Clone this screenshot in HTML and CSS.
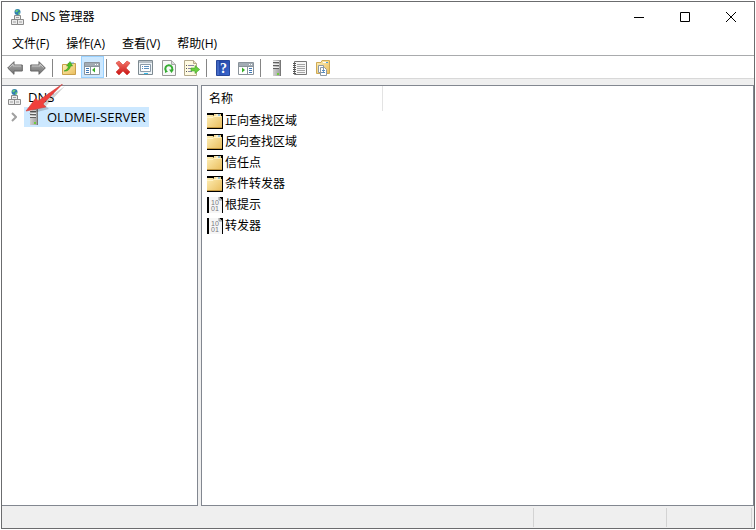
FILE: index.html
```html
<!DOCTYPE html>
<html lang="zh-CN">
<head>
  <meta charset="UTF-8" />
  <title>DNS 管理器</title>
  <meta name="viewport" content="width=device-width, initial-scale=1" />
  <link rel="stylesheet" href="styles.css">
</head>
<body>
  <!-- shared icons -->
  <svg class="defs" width="0" height="0" aria-hidden="true">
    <defs>
      <linearGradient id="gold" x1="0" y1="0" x2="1" y2="1">
        <stop offset="0" stop-color="#fff0b8" />
        <stop offset="1" stop-color="#e9bd5c" />
      </linearGradient>
      <linearGradient id="metal" x1="0" y1="0" x2="0" y2="1">
        <stop offset="0" stop-color="#b4b4b4" />
        <stop offset="1" stop-color="#6f6f6f" />
      </linearGradient>
      <linearGradient id="tower" x1="0" y1="0" x2="1" y2="0">
        <stop offset="0" stop-color="#d0d0d0" />
        <stop offset="1" stop-color="#9a9a9a" />
      </linearGradient>
      <linearGradient id="red" x1="0" y1="0" x2="0" y2="1">
        <stop offset="0" stop-color="#f4776b" />
        <stop offset="1" stop-color="#c91313" />
      </linearGradient>
      <linearGradient id="blue" x1="0" y1="0" x2="1" y2="1">
        <stop offset="0" stop-color="#1d3f9c" />
        <stop offset="1" stop-color="#3b68d0" />
      </linearGradient>
      <symbol id="dns" viewBox="0 0 16 16">
        <circle cx="7.500" cy="3" r="3" fill="#2f7fb0" />
        <path d="M5 2l2-1.500 1.500 1-2 2zM8 4l2-1v2l-1 .8z" fill="#6fd06f" />
        <path d="M4.500 6.500h6v4h-6zM1.500 10.500h6v5h-6zM7.500 10.500h6v5h-6z" fill="#ececec" stroke="#8a8a8a" />
        <path d="M6 8.500h3M3 13h3M9 13h3" stroke="#a0a0a0" />
      </symbol>
      <symbol id="server" viewBox="0 0 16 16">
        <path d="M4 0h8v16H4z" fill="url(#tower)" />
        <path d="M11 0h1v16h-1z" fill="#777" />
        <path d="M4 2h6v1H4zM4 5h6v1H4zM4 8h6v1H4z" fill="#5f5f5f" />
        <path d="M4 1h6v1H4zM4 4h6v1H4zM4 7h6v1H4z" fill="#ededed" />
        <path d="M8 13h2v2H8z" fill="#6fce3c" />
      </symbol>
      <symbol id="folder" viewBox="0 0 16 16">
        <path d="M0 0h16v16H0z" fill="#000" />
        <path d="M0 2h6l1 1V1h7v2h1v12H0z" fill="url(#gold)" />
        <path d="M0 4.500h6l1-1h7" fill="none" stroke="#fff3c6" />
        <path d="M9 2h4" stroke="#fff" /><path d="M11 2h2" stroke="#398fd2" />
        <path d="M0 14.500h15" stroke="#c59a42" />
      </symbol>
      <symbol id="record" viewBox="0 0 16 16">
        <path d="M0 0h16v16H0z" fill="#000" />
        <path d="M2 0h10l3 3v13H2z" fill="#f6f6f6" />
        <path d="M12 0v3h3" fill="#ccc" stroke="#999" />
        <text x="4" y="8" class="bits">10</text>
        <text x="4" y="14" class="bits">01</text>
      </symbol>
    </defs>
  </svg>

  <div class="window">
    <header class="titlebar">
      <svg class="icon"><use href="#dns" /></svg>
      <h1>DNS 管理器</h1>
      <div class="controls">
        <button type="button" aria-label="最小化"><svg viewBox="0 0 10 10"><path d="M0 5.500h10" /></svg></button>
        <button type="button" aria-label="最大化"><svg viewBox="0 0 10 10"><path d="M.5.5h9v9h-9z" /></svg></button>
        <button type="button" aria-label="关闭"><svg viewBox="0 0 10 10"><path d="M0 0l10 10M10 0L0 10" /></svg></button>
      </div>
    </header>

    <nav class="menubar">
      <button type="button">文件(F)</button>
      <button type="button">操作(A)</button>
      <button type="button">查看(V)</button>
      <button type="button">帮助(H)</button>
    </nav>

    <div class="toolbar">
      <button type="button" aria-label="后退">
        <svg class="icon" viewBox="0 0 16 16"><path d="M.7 8L7 1.700v3.300h8.300v6H7v3.300z" fill="url(#metal)" stroke="#666" /><path d="M2.500 7.500L6 4v2h8" fill="none" stroke="#c8c8c8" /></svg>
      </button>
      <button type="button" aria-label="前进">
        <svg class="icon" viewBox="0 0 16 16"><path d="M15.300 8L9 1.700v3.300H.7v6H9v3.300z" fill="url(#metal)" stroke="#666" /><path d="M13.500 7.500L10 4v2H2" fill="none" stroke="#c8c8c8" /></svg>
      </button>
      <span class="sep"></span>
      <button type="button" aria-label="上一级">
        <svg class="icon" viewBox="0 0 16 16"><path d="M1.500 4.500H6l1-1h7.500v11h-13z" fill="url(#gold)" stroke="#c9a04c" /><path d="M10 3h3" stroke="#5aa6dd" /><path d="M3 11c3-1 4-3 4.500-5H5.500L9 1.500 11.500 6h-2C9 9 7 11.500 3 11z" fill="#4fc324" stroke="#2f8f18" stroke-width=".5" /></svg>
      </button>
      <button type="button" class="on" aria-label="显示/隐藏控制台树" aria-pressed="true">
        <svg class="icon" viewBox="0 0 16 16"><path d="M.5 2.500h15v12H.5z" fill="#fff" stroke="#8a939b" /><path d="M1 3h14v3H1z" fill="#a3acb4" /><path d="M11 4.500h1M13 4.500h1" stroke="#fff" /><path d="M1 6.500h14M6.500 7v7" stroke="#8a939b" /><path d="M2 8.500h3M2 10.500h3M2 12.500h3" stroke="#3f78b4" /><path d="M11 7.500v5L8 10z" fill="#36ae25" /></svg>
      </button>
      <span class="sep"></span>
      <button type="button" aria-label="删除">
        <svg class="icon" viewBox="0 0 16 16"><path d="M1 3l3-2 4 4 4-4 3 2-4 5 4 4-3 3-4-4-4 4-3-3 4-4z" fill="url(#red)" stroke="#d33a32" stroke-width=".6" /></svg>
      </button>
      <button type="button" aria-label="属性">
        <svg class="icon" viewBox="0 0 16 16"><path d="M.5.500h14v14H.5z" fill="#eef4f8" stroke="#7d8990" /><path d="M1 2h13" stroke="#b8c0c6" stroke-width="2" /><path d="M2.500 4.500h10v7h-10z" fill="#fff" stroke="#8c9ba8" /><path d="M4 6.500h1M4 8.500h1M6 6.500h5M6 8.500h5" stroke="#5c90bf" /><path d="M6 13.500h4" stroke="#31b7e5" /></svg>
      </button>
      <button type="button" aria-label="刷新">
        <svg class="icon" viewBox="0 0 16 16"><path d="M1.500.500h9l4 4v11h-13z" fill="#f8f8f8" stroke="#999" /><path d="M10.500.500v4h4" fill="#ddd" stroke="#aaa" /><path d="M4.800 10.500a3.500 3.500 0 1 1 6.200-.3" fill="none" stroke="#36ad32" stroke-width="2" /><path d="M8 9.500h5L10.500 13zM4 9l3 2.500L4 13z" fill="#36ad32" /></svg>
      </button>
      <button type="button" aria-label="导出列表">
        <svg class="icon" viewBox="0 0 16 16"><path d="M.5.500h9l3 3v12H.5z" fill="#fffbe2" stroke="#b3a98b" /><path d="M9.500.500v3h3" fill="#e8dfbd" stroke="#b3a98b" /><path d="M2 5.500h1M2 8.500h1M2 11.500h1" stroke="#555" /><path d="M4 5.500h6M4 8.500h4M4 11.500h4" stroke="#8887a8" /><path d="M7 8h4V5.500l4.700 4-4.700 4V11H7z" fill="#69cf3f" stroke="#44a62b" stroke-width=".6" /></svg>
      </button>
      <span class="sep"></span>
      <button type="button" aria-label="帮助">
        <svg class="icon" viewBox="0 0 16 16"><path d="M1.500.500h13v15h-13z" fill="url(#blue)" stroke="#27479b" /><path d="M3 1v14" stroke="#5d83da" /><text x="5" y="13" class="mark">?</text></svg>
      </button>
      <button type="button" aria-label="显示/隐藏操作窗格">
        <svg class="icon" viewBox="0 0 16 16"><path d="M.5 2.500h15v12H.5z" fill="#fff" stroke="#8a939b" /><path d="M1 3h14v3H1z" fill="#a3acb4" /><path d="M11 4.500h1M13 4.500h1" stroke="#fff" /><path d="M1 6.500h14M9.500 7v7" stroke="#8a939b" /><path d="M11 8.500h3M11 10.500h3M11 12.500h3" stroke="#3f78b4" /><path d="M4 7.500v5l3-2.500z" fill="#36ae25" /></svg>
      </button>
      <span class="sep"></span>
      <button type="button" aria-label="新建服务器"><svg class="icon"><use href="#server" /></svg></button>
      <button type="button" aria-label="记录">
        <svg class="icon" viewBox="0 0 16 16"><path d="M2.500 1.500h12v13h-12z" fill="#f6f6f6" stroke="#777" /><path d="M5 4.500h8M5 6.500h8M5 8.500h8M5 10.500h8M5 12.500h8" stroke="#a5a5a5" /><path d="M1 3.500h3M1 5.500h3M1 7.500h3M1 9.500h3M1 11.500h3M1 13.500h3" stroke="#555" /></svg>
      </button>
      <button type="button" aria-label="新建区域">
        <svg class="icon" viewBox="0 0 16 16"><path d="M1.500 2.500H6l1-2h7.500v13h-13z" fill="url(#gold)" stroke="#cfaa55" /><path d="M8 2.500h5" stroke="#fff" /><path d="M11 2.500h2" stroke="#4e9fd9" /><path d="M3.500 5.500h5v7h-5zM5.500 7.500h4l2 2v6h-6z" fill="#fff" stroke="#8d99a4" /><path d="M7 10.500h3M7 12.500h3" stroke="#548cc4" /></svg>
      </button>
    </div>

    <main class="panes">
      <section class="tree">
        <div class="node"><svg class="icon"><use href="#dns" /></svg><span>DNS</span></div>
        <div class="node child">
          <button type="button" class="expand" aria-label="展开"><svg viewBox="0 0 6 10"><path d="M1 1l4 4-4 4" /></svg></button>
          <span class="selected"><svg class="icon"><use href="#server" /></svg>OLDMEI-SERVER</span>
        </div>
        <svg class="arrow" viewBox="0 0 42 32" aria-hidden="true"><path d="M40 2L21 22l3 3L4 30l8-11 3 1z" fill="#000" opacity=".18" /><path d="M37.500 0L18 20l3 3L1 27l10-13 2 3z" fill="#f0403c" stroke="#c9403c" stroke-width=".6" /></svg>
      </section>

      <section class="content">
        <table>
          <thead>
            <tr><th>名称</th></tr>
          </thead>
          <tbody>
            <tr><td><svg class="icon"><use href="#folder" /></svg>正向查找区域</td></tr>
            <tr><td><svg class="icon"><use href="#folder" /></svg>反向查找区域</td></tr>
            <tr><td><svg class="icon"><use href="#folder" /></svg>信任点</td></tr>
            <tr><td><svg class="icon"><use href="#folder" /></svg>条件转发器</td></tr>
            <tr><td><svg class="icon"><use href="#record" /></svg>根提示</td></tr>
            <tr><td><svg class="icon"><use href="#record" /></svg>转发器</td></tr>
          </tbody>
        </table>
      </section>
    </main>

    <footer class="statusbar">
      <span class="message"></span>
      <span class="progress"></span>
      <span class="info"></span>
    </footer>
  </div>
</body>
</html>
```
FILE: styles.css
```css
* {
  box-sizing: border-box;
}

body {
  margin: 0;
  padding: 1px;
  height: 100vh;
  background: #fff;
  color: #000;
  font-family: "Open Sans", "Noto Sans CJK SC", sans-serif;
  font-size: 12px;
  line-height: 20px;
}

button {
  display: flex;
  align-items: center;
  justify-content: center;
  padding: 0;
  border: none;
  background: none;
  color: inherit;
  font: inherit;
}

.defs {
  position: absolute;
}

.icon {
  display: block;
  flex: none;
  width: 16px;
  height: 16px;
}

.bits {
  font-family: "Liberation Sans", sans-serif;
  font-size: 7px;
  fill: #77777f;
}

.mark {
  font-family: "Liberation Serif", serif;
  font-size: 14px;
  font-weight: bold;
  fill: #fff;
}

.window {
  display: flex;
  flex-direction: column;
  height: 100%;
  border: 1px solid #6b6c6e;
}

/* title bar */
.titlebar {
  display: flex;
  align-items: center;
  height: 29px;
  padding-left: 8px;
}

.titlebar h1 {
  flex: 1;
  margin: 0 0 0 5px;
  font-size: 12px;
  font-weight: normal;
}

.controls {
  display: flex;
}

.controls button {
  width: 46px;
  height: 29px;
}

.controls svg {
  width: 10px;
  height: 10px;
  fill: none;
  stroke: #000;
  overflow: visible;
}

/* menu */
.menubar {
  display: flex;
  gap: 17px;
  height: 25px;
  padding: 2px 10px 0;
  border-bottom: 1px solid #a9abad;
}

/* toolbar */
.toolbar {
  display: flex;
  height: 23px;
  padding-left: 2px;
  border-bottom: 1px solid #d8d8d8;
}

.toolbar button {
  width: 23px;
  height: 22px;
  padding: 2px 1px 0 0;
}

.toolbar .on {
  background: #cce8ff;
  border: 1px solid #99d1ff;
}

.sep {
  width: 1px;
  height: 18px;
  margin: 3px 5px 0 2px;
  background: #858585;
}

/* panes */
.panes {
  display: flex;
  flex: 1;
  gap: 3px;
  padding-top: 6px;
  background: #efefef;
}

.tree,
.content {
  background: #fff;
  border: 1px solid #828790;
}

.tree {
  position: relative;
  flex: none;
  width: 196px;
  padding-top: 1px;
  border-left: none;
  font-size: 13px;
}

.content {
  flex: 1;
}

.node {
  display: flex;
  align-items: center;
  height: 20px;
  padding-left: 5px;
}

.node > span {
  margin-left: 5px;
}

.expand {
  width: 14px;
  height: 20px;
}

.expand svg {
  width: 6px;
  height: 10px;
  fill: none;
  stroke: #a0a0a0;
  stroke-width: 2;
}

.node > .selected {
  display: flex;
  align-items: center;
  gap: 5px;
  margin-left: 3px;
  padding: 0 4px 0 2px;
  background: #cce8ff;
}

/* red pointer over the tree */
.arrow {
  position: absolute;
  left: 23px;
  top: -2px;
  width: 42px;
  height: 32px;
}

table {
  width: 181px;
  border-collapse: collapse;
}

th,
td {
  padding: 0;
  font-weight: normal;
  text-align: left;
}

th {
  height: 25px;
  padding-left: 7px;
  border-right: 1px solid #e3e3e3;
}

td {
  display: flex;
  align-items: center;
  gap: 2px;
  height: 21px;
  padding: 0 0 1px 5px;
}

/* status bar */
.statusbar {
  display: flex;
  height: 22px;
  padding: 2px 2px 1px 0;
  background: #efefef;
}

.statusbar span {
  border-right: 1px solid #d3d3d3;
}

.message {
  flex: 1;
}

.progress {
  width: 133px;
}

.info {
  width: 85px;
}
```
